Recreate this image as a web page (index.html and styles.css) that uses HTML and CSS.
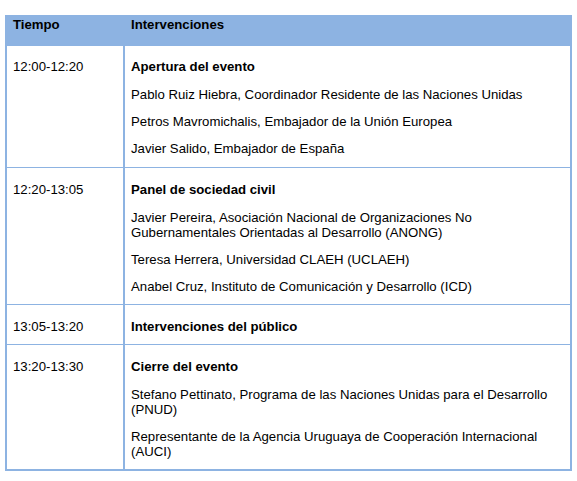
FILE: index.html
```html
<!DOCTYPE html>
<html lang="es">
<head>
<meta charset="utf-8">
<title>Agenda</title>
<link rel="stylesheet" href="styles.css">
</head>
<body>
<table class="agenda">
  <colgroup><col class="c-time"><col class="c-main"></colgroup>
  <thead>
    <tr>
      <th class="time">Tiempo</th>
      <th class="main">Intervenciones</th>
    </tr>
  </thead>
  <tbody>
    <tr class="first">
      <td class="time">12:00-12:20</td>
      <td class="main">
        <p class="title">Apertura del evento</p>
        <p>Pablo Ruiz Hiebra, Coordinador Residente de las Naciones Unidas</p>
        <p>Petros Mavromichalis, Embajador de la Unión Europea</p>
        <p>Javier Salido, Embajador de España</p>
      </td>
    </tr>
    <tr>
      <td class="time">12:20-13:05</td>
      <td class="main">
        <p class="title">Panel de sociedad civil</p>
        <p>Javier Pereira, Asociación Nacional de Organizaciones No Gubernamentales Orientadas al Desarrollo (ANONG)</p>
        <p>Teresa Herrera, Universidad CLAEH (UCLAEH)</p>
        <p>Anabel Cruz, Instituto de Comunicación y Desarrollo (ICD)</p>
      </td>
    </tr>
    <tr>
      <td class="time">13:05-13:20</td>
      <td class="main">
        <p class="title">Intervenciones del público</p>
      </td>
    </tr>
    <tr>
      <td class="time">13:20-13:30</td>
      <td class="main">
        <p class="title">Cierre del evento</p>
        <p>Stefano Pettinato, Programa de las Naciones Unidas para el Desarrollo (PNUD)</p>
        <p>Representante de la Agencia Uruguaya de Cooperación Internacional (AUCI)</p>
      </td>
    </tr>
  </tbody>
</table>
</body>
</html>
```

FILE: styles.css
```css
html, body {
  margin: 0;
  padding: 0;
  background: #ffffff;
}

body {
  font-family: "Liberation Sans", Arial, sans-serif;
  font-size: 13.2px;
  line-height: 15px;
  color: #000000;
}

.agenda {
  margin: 15px 0 0 5px;
  width: 567px;
  table-layout: fixed;
  border-collapse: separate;
  border-spacing: 0;
  border: 2px solid #8db3e2;
}

.c-time { width: 118px; }

.agenda th,
.agenda td {
  text-align: left;
  vertical-align: top;
  padding: 14px 6px 10px 6px;
  border-top: 1px solid #8db3e2;
}

.agenda th {
  background: #8db3e2;
  font-weight: bold;
  padding: 0 6px 14px 6px;
  border-top: 0;
}

.agenda tr.first td {
  border-top: 0;
  padding-top: 13px;
  padding-bottom: 11px;
}

.agenda .time {
  border-right: 2px solid #8db3e2;
}

.agenda p {
  margin: 0 0 12px 0;
}

.agenda p.title {
  font-weight: bold;
  margin-bottom: 13px;
}

.agenda p:last-child {
  margin-bottom: 0;
}
```
